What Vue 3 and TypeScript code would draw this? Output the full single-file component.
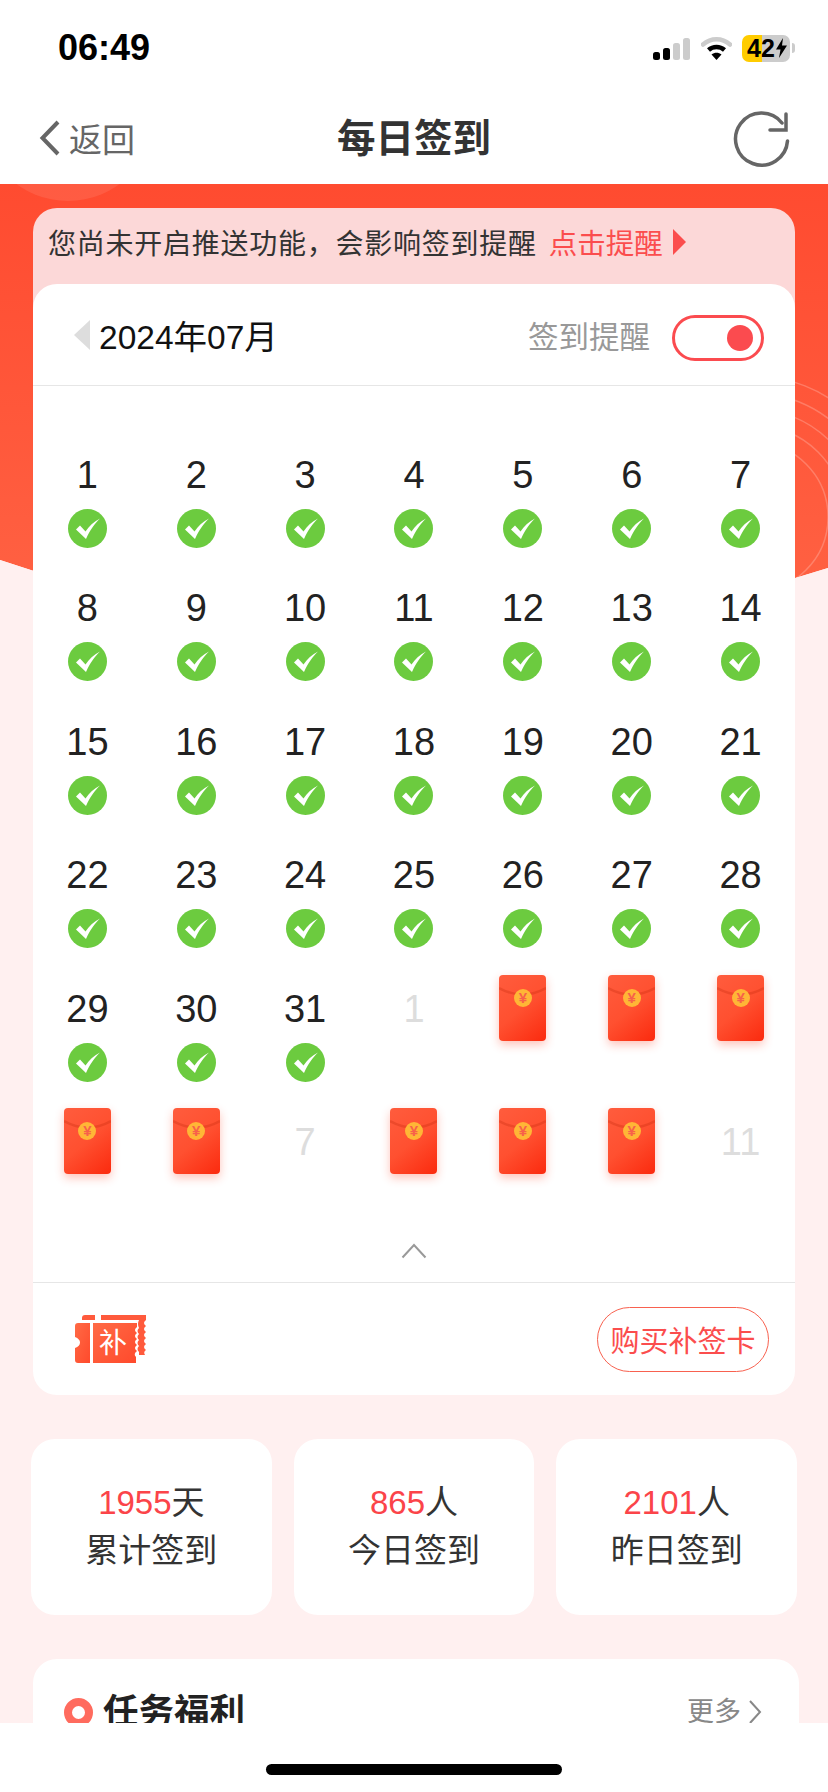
<script setup lang="ts">
type Cell = { n?: number; kind: 'check' | 'packet' | 'muted' }
const cells: Cell[] = [
  ...Array.from({ length: 31 }, (_, i): Cell => ({ n: i + 1, kind: 'check' })),
  { n: 1, kind: 'muted' },
  { kind: 'packet' }, { kind: 'packet' }, { kind: 'packet' },
  { kind: 'packet' }, { kind: 'packet' },
  { n: 7, kind: 'muted' },
  { kind: 'packet' }, { kind: 'packet' }, { kind: 'packet' },
  { n: 11, kind: 'muted' },
]
const stats = [
  { num: '1955', unit: '天', label: '累计签到' },
  { num: '865', unit: '人', label: '今日签到' },
  { num: '2101', unit: '人', label: '昨日签到' },
]
const rings = [75, 92, 108, 124, 141]
</script>

<template>
  <div class="phone">
    <header class="status">
      <span class="time">06:49</span>
      <div class="status-icons">
        <svg width="37" height="23" viewBox="0 0 37 23" class="signal">
          <rect x="0" y="15" width="7" height="8" rx="2.5" fill="#000" />
          <rect x="10" y="11" width="7" height="12" rx="2.5" fill="#000" />
          <rect x="20" y="6" width="7" height="17" rx="2.5" fill="#ccc" />
          <rect x="30" y="1" width="7" height="22" rx="2.5" fill="#ccc" />
        </svg>
        <svg width="31" height="24" viewBox="0 0 31 24" class="wifi">
          <path d="M2 8.5C10 1.5 21 1.5 29 8.5" fill="none" stroke="#ccc" stroke-width="4.5" stroke-linecap="round" />
          <path d="M7.5 14C12 10 19 10 23.5 14" fill="none" stroke="#000" stroke-width="4.5" />
          <path d="M10.5 18.5L15.5 24L20.5 18.5C17.5 16.3 13.5 16.3 10.5 18.5Z" fill="#000" />
        </svg>
        <div class="battery">
          <span class="battery-level">42</span>
          <svg width="11" height="20" viewBox="0 0 11 20" class="bolt"><path d="M7 0L0 11.5H4.5L3 20L11 7.5H6L7 0Z" fill="#000" /></svg>
        </div>
        <i class="battery-nub"></i>
      </div>
    </header>

    <nav class="nav">
      <div class="back">
        <svg width="22" height="36" viewBox="0 0 22 36"><path d="M19 2L3.5 18L19 34" fill="none" stroke="#666" stroke-width="4" /></svg>
        <span>返回</span>
      </div>
      <h1 class="title">每日签到</h1>
      <svg class="refresh" width="60" height="60" viewBox="0 0 60 60">
        <path d="M56.5 32A26 26 0 1 1 51 14" fill="none" stroke="#666" stroke-width="3.5" stroke-linecap="round" />
        <path d="M55 5V21H39" fill="none" stroke="#666" stroke-width="3.5" stroke-linecap="round" />
      </svg>
    </nav>

    <main class="main">
      <svg class="backdrop" width="828" height="520" viewBox="0 0 828 520">
        <defs>
          <linearGradient id="hero" x1="0" y1="0" x2="0" y2="1">
            <stop offset="0" stop-color="#ff4b30" />
            <stop offset="1" stop-color="#ff6344" />
          </linearGradient>
        </defs>
        <path d="M0 0H828V384Q414 516 0 376Z" fill="url(#hero)" />
        <circle cx="68" cy="-69.5" r="86.5" fill="#fff" fill-opacity=".09" />
        <circle v-for="r in rings" :key="r" cx="753" cy="333" :r="r" fill="none" stroke="#fff" stroke-opacity=".22" stroke-width="1.5" />
        <path d="M0 376Q414 516 828 384V520H0Z" fill="#fff0f0" />
      </svg>

      <section class="notice">
        <span class="notice-text">您尚未开启推送功能，会影响签到提醒</span>
        <span class="notice-link">点击提醒</span>
        <i class="notice-arrow"></i>
      </section>

      <section class="calendar">
        <div class="cal-head">
          <i class="prev"></i>
          <span class="month">2024年07月</span>
          <span class="remind">签到提醒</span>
          <div class="toggle"><i></i></div>
        </div>

        <div class="grid">
          <div v-for="(c, i) in cells" :key="i" class="cell">
            <div v-if="c.kind === 'packet'" class="packet">
              <svg width="47" height="24" viewBox="0 0 47 24" class="flap">
                <path d="M0 13Q23.5 26 47 13" fill="none" stroke="#b81f05" stroke-opacity=".25" stroke-width="2.5" />
              </svg>
              <b class="coin">¥</b>
            </div>
            <template v-else>
              <div class="num" :class="{ muted: c.kind === 'muted' }">{{ c.n }}</div>
              <svg v-if="c.kind === 'check'" width="39" height="39" viewBox="0 0 39 39" class="check">
                <circle cx="19.5" cy="19.5" r="19.5" fill="#6ccb3f" />
                <path d="M8 20.5L12 16.5L17.5 22.5C21 17 25.5 13 32 9.5C26.500 15 22 21 18 30Z" fill="#fff" />
              </svg>
            </template>
          </div>
        </div>

        <div class="collapse">
          <svg width="26" height="17" viewBox="0 0 26 17"><path d="M1.5 15.5L13 3L24.5 15.5" fill="none" stroke="#999" stroke-width="2" /></svg>
        </div>

        <div class="cal-foot">
          <div class="ticket">
            <svg width="72" height="50" viewBox="0 0 72 50">
              <defs>
                <linearGradient id="tk" x1="0" y1="0" x2="1" y2="1">
                  <stop offset="0" stop-color="#ff6a45" />
                  <stop offset="1" stop-color="#ff4a2c" />
                </linearGradient>
              </defs>
              <path d="M7 4Q7 1 10 1H20V6H7Z" fill="#ff5a3c" />
              <path d="M26 1H71V6Q67 9 71 12Q67 15 71 18Q67 21 71 24Q67 27 71 30Q67 33 71 36Q68 38 70 41H64V38Q61 35 64 32Q61 29 64 26Q61 23 64 20Q61 17 64 14Q62 10 64 6H26Z" fill="#ff5a3c" />
              <path d="M0 12Q0 9 3 9H15V49H3Q0 49 0 46V34Q5 32 5 28.500Q5 25 0 23Z" fill="url(#tk)" />
              <path d="M18 9H62V13Q58 16 62 19Q58 22 62 25Q58 28 62 31Q58 34 62 37Q58 40 61 43V49H18Z" fill="url(#tk)" />
            </svg>
            <span class="ticket-char">补</span>
          </div>
          <button class="buy" type="button">购买补签卡</button>
        </div>
      </section>

      <section class="stats">
        <div v-for="s in stats" :key="s.label" class="stat">
          <div><span class="stat-num">{{ s.num }}</span>{{ s.unit }}</div>
          <div>{{ s.label }}</div>
        </div>
      </section>

      <section class="tasks">
        <i class="ring"></i>
        <h2 class="tasks-title">任务福利</h2>
        <span class="more">更多</span>
        <svg width="14" height="26" viewBox="0 0 14 26"><path d="M2 2L12 13L2 24" fill="none" stroke="#888" stroke-width="2" /></svg>
      </section>
    </main>

    <div class="home"><i></i></div>
  </div>
</template>

<style>
html, body { margin: 0; background: #fff; }
</style>

<style scoped>
.phone {
  position: relative;
  width: 828px;
  height: 1792px;
  overflow: hidden;
  background: #fff;
  font-family: "Liberation Sans", "Noto Sans CJK SC", sans-serif;
  color: #222;
}
.status {
  height: 92px;
  display: flex;
  justify-content: space-between;
  align-items: center;
  padding: 4px 33px 0 58px;
  box-sizing: border-box;
}
.time { font-weight: 700; font-size: 36px; color: #000; }
.status-icons { display: flex; align-items: center; }
.signal { margin-right: 11px; }
.wifi { margin-right: 10px; }
.battery {
  width: 48px;
  height: 27px;
  border-radius: 7px;
  background: linear-gradient(90deg, #ffcc00 0 20px, #ccc 20px);
  display: flex;
  align-items: center;
  padding-left: 5px;
  box-sizing: border-box;
  font-size: 25px;
  font-weight: 700;
  color: #000;
}
.battery-level { line-height: 27px; }
.bolt { margin-left: 1px; }
.battery-nub { width: 3px; height: 10px; margin-left: 2px; background: #ccc; border-radius: 0 3px 3px 0; }
.nav {
  height: 92px;
  position: relative;
  display: flex;
  align-items: center;
  justify-content: space-between;
  padding: 0 38px 0 39px;
  box-sizing: border-box;
}
.back { display: flex; align-items: center; gap: 8px; font-size: 33px; color: #666; }
.title {
  position: absolute;
  left: 0;
  right: 0;
  margin: 0;
  text-align: center;
  font-size: 38.500px;
  font-weight: 700;
  color: #333;
  top: 23px;
  line-height: 48px;
}
.refresh { margin-right: -1px; margin-top: 2px; }
.main {
  position: relative;
  height: 1608px;
  background: #fff0f0;
  padding-top: 24px;
  box-sizing: border-box;
}
.backdrop { position: absolute; left: 0; top: 0; }
.notice {
  position: relative;
  margin: 0 33px -24px;
  height: 100px;
  box-sizing: border-box;
  padding: 0 0 33px 15px;
  background: #fcd8d8;
  border-radius: 24px 24px 0 0;
  display: flex;
  align-items: center;
  font-size: 28px;
  color: #333;
}
.notice-text { letter-spacing: .75px; }
.notice-link { margin-left: 12px; color: #fb4d4d; font-size: 28.500px; }
.notice-arrow {
  width: 0; height: 0;
  margin-left: 10px;
  border-left: 13px solid #fb4d4d;
  border-top: 13px solid transparent;
  border-bottom: 13px solid transparent;
}
.calendar {
  position: relative;
  margin: 0 33px;
  height: 1111px;
  background: #fff;
  border-radius: 24px;
  display: flex;
  flex-direction: column;
}
.cal-head {
  height: 102px;
  flex: none;
  box-sizing: border-box;
  border-bottom: 1.5px solid #e6e6e6;
  display: flex;
  align-items: center;
  padding: 0 31px 0 41px;
}
.prev {
  width: 0; height: 0;
  border-right: 16px solid #ddd;
  border-top: 15px solid transparent;
  border-bottom: 15px solid transparent;
}
.month { margin-left: 9px; font-size: 33.500px; color: #111; flex: 1; }
.remind { font-size: 30.500px; color: #999; }
.toggle {
  width: 92px;
  height: 46px;
  margin: 6px 0 0 22px;
  border: 3.5px solid #fb4b4f;
  border-radius: 24px;
  box-sizing: border-box;
  display: flex;
  align-items: center;
  justify-content: flex-end;
  padding-right: 8px;
}
.toggle i { width: 26px; height: 26px; border-radius: 50%; background: #fb4b4f; }
.grid {
  display: grid;
  grid-template-columns: repeat(7, 1fr);
  grid-auto-rows: 133.4px;
  padding-top: 69px;
  flex: none;
  height: 868px;
  box-sizing: border-box;
}
.cell { display: flex; flex-direction: column; align-items: center; }
.num { height: 40px; line-height: 40px; font-size: 38px; color: #222; margin-bottom: 14px; }
.num.muted { color: #ddd; }
.packet {
  position: relative;
  width: 47px;
  height: 66px;
  margin-top: -14px;
  border-radius: 4px;
  background: linear-gradient(140deg, #ff5c3d 0%, #ff5030 50%, #fb2a0e 100%);
  box-shadow: 0 4px 10px rgba(255, 60, 30, .3);
}
.flap { position: absolute; left: 0; top: 0; }
.coin {
  position: absolute;
  left: 14.5px;
  top: 14px;
  width: 18px;
  height: 18px;
  border-radius: 50%;
  background: #ffb636;
  color: #f8604a;
  font-size: 15px;
  font-weight: 700;
  line-height: 18px;
  text-align: center;
}
.collapse { height: 40px; flex: none; display: flex; justify-content: center; align-items: flex-start; margin-top: -12px; }
.cal-foot {
  height: 113px;
  flex: none;
  box-sizing: border-box;
  border-top: 1.5px solid #e6e6e6;
  display: flex;
  align-items: center;
  justify-content: space-between;
  padding: 0 26px 0 42px;
}
.ticket { position: relative; width: 72px; height: 50px; display: flex; }
.ticket-char {
  position: absolute;
  left: 18px;
  top: 10px;
  width: 40px;
  text-align: center;
  color: #fff;
  font-size: 28px;
  line-height: 40px;
}
.buy {
  width: 172px;
  height: 65px;
  padding: 0;
  border: 1.5px solid #f8614f;
  border-radius: 33px;
  background: #fff;
  color: #fb4d4d;
  font: 29px "Liberation Sans", "Noto Sans CJK SC", sans-serif;
}
.stats {
  position: relative;
  display: flex;
  gap: 22px;
  margin: 44px 31px 0;
}
.stat {
  width: 241px;
  height: 176px;
  box-sizing: border-box;
  background: #fff;
  border-radius: 24px;
  display: flex;
  flex-direction: column;
  align-items: center;
  justify-content: center;
  font-size: 33px;
  line-height: 48px;
  color: #333;
}
.stat-num { color: #fb4449; }
.tasks {
  position: relative;
  margin: 44px 29px 0 33px;
  height: 200px;
  background: #fff;
  border-radius: 24px;
  display: flex;
  align-items: flex-start;
  padding: 30px 37px 0 31px;
  box-sizing: border-box;
}
.ring {
  width: 29px;
  height: 29px;
  margin-top: 9px;
  box-sizing: border-box;
  border: 8px solid #ff6b5e;
  border-radius: 50%;
}
.tasks-title { margin: 0 0 0 10px; font-size: 35.500px; line-height: 46px; color: #222; font-weight: 700; flex: 1; }
.more { font-size: 27px; color: #888; line-height: 46px; margin-right: 7px; }
.tasks svg { margin-top: 10px; }
.home {
  position: absolute;
  left: 0;
  right: 0;
  bottom: 0;
  height: 69px;
  background: #fff;
  display: flex;
  justify-content: center;
}
.home i { width: 296px; height: 11px; margin-top: 41px; border-radius: 6px; background: #000; }
</style>
